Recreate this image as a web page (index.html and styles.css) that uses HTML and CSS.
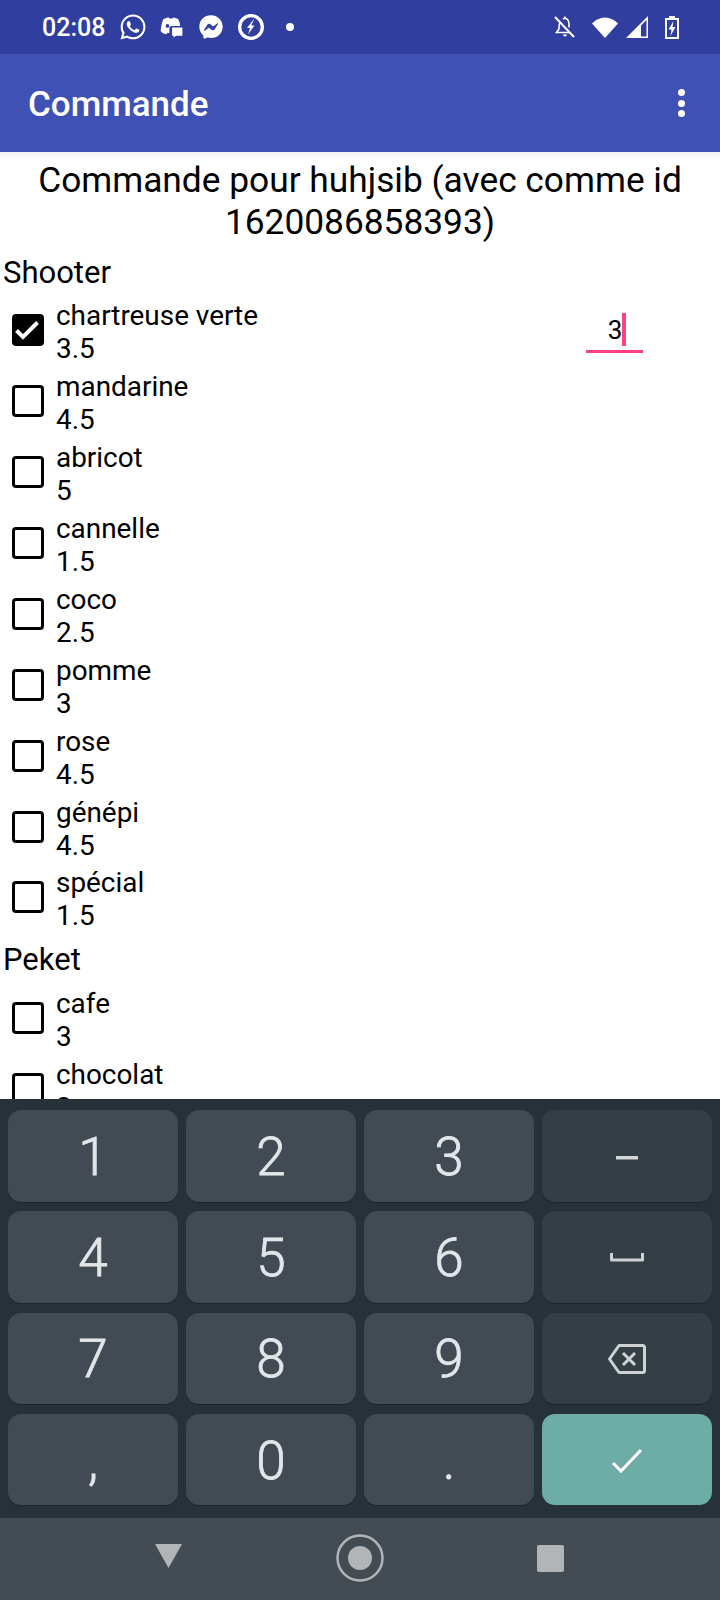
FILE: index.html
```html
<!DOCTYPE html>
<html lang="fr">
<head>
<meta charset="utf-8">
<title>Commande</title>
<link rel="stylesheet" href="styles.css">
</head>
<body>
<div class="phone">
  <header class="status">
    <span class="time">02:08</span>
    <svg class="si wa" viewBox="0 0 24 24"><path d="M12.04 2c-5.46 0-9.91 4.45-9.91 9.91 0 1.75.46 3.45 1.32 4.95L2.05 22l5.25-1.38c1.45.79 3.08 1.21 4.74 1.21 5.46 0 9.91-4.45 9.91-9.91 0-2.65-1.03-5.14-2.9-7.01A9.816 9.816 0 0 0 12.04 2m.01 1.67c2.2 0 4.26.86 5.82 2.42a8.225 8.225 0 0 1 2.41 5.83c0 4.54-3.7 8.23-8.24 8.23-1.48 0-2.93-.39-4.19-1.15l-.3-.17-3.12.82.83-3.04-.2-.32a8.188 8.188 0 0 1-1.26-4.38c.01-4.54 3.7-8.24 8.25-8.24M8.53 7.33c-.16 0-.43.06-.66.31-.22.25-.87.86-.87 2.07 0 1.22.89 2.39 1 2.56.14.17 1.76 2.67 4.25 3.73.59.27 1.05.42 1.41.53.59.19 1.13.16 1.56.1.48-.07 1.46-.6 1.67-1.18.21-.58.21-1.07.15-1.18-.07-.1-.23-.16-.48-.27-.25-.14-1.47-.74-1.69-.82-.23-.08-.37-.12-.56.12-.16.25-.64.81-.78.97-.15.17-.29.19-.53.07-.26-.13-1.06-.39-2-1.23-.74-.66-1.23-1.47-1.38-1.72-.12-.24-.01-.39.11-.5.11-.11.27-.29.37-.44.13-.14.17-.25.25-.41.08-.17.04-.31-.02-.43-.06-.11-.56-1.35-.77-1.84-.2-.48-.4-.42-.56-.43-.14 0-.3-.01-.47-.01z"/></svg>
    <svg class="si dc" viewBox="0 0 24 24"><path fill-rule="evenodd" d="M5.5 4.5C7.5 3.6 9.3 3.2 10 3.2l.5 1h3l.5-1c1.2.2 3 .8 4.500 1.500 1 1.700 1.800 4 2 6.300h-8c-1.100 0-2 .9-2 2V17.500c-.6 0-1.200-.1-1.800-.2l-.9 1.500c-2.300-.4-4.300-1.500-5.300-2.800 0-4 1.300-8.700 2.500-11.500zM8.700 9.200a1.700 1.800 0 1 0 0 3.600 1.700 1.800 0 1 0 0-3.600z"/><path d="M13 12.500h9.500v7.500H16.500L14.500 22v-2H13z"/></svg>
    <svg class="si ms" viewBox="0 0 24 24"><path fill-rule="evenodd" d="M12 2C6.400 2 2 6.100 2 11.700c0 2.900 1.200 5.500 3.100 7.200.2.100.3.400.3.600l.1 1.800c0 .6.600 1 1.200.7l2-.9c.2-.1.400-.1.600 0 .9.200 1.800.4 2.700.4 5.600 0 10-4.100 10-9.700S17.600 2 12 2zm6 7.500l-3 4.700c-.5.7-1.500.9-2.200.4l-2.300-1.800c-.2-.2-.5-.2-.7 0l-3.100 2.400c-.4.3-1-.2-.7-.6l3-4.700c.5-.7 1.500-.9 2.200-.4l2.300 1.800c.2.200.5.200.7 0l3.100-2.400c.4-.3 1 .2.700.6z"/></svg>
    <svg class="si bolt" viewBox="0 0 26 26"><path fill-rule="evenodd" d="M13 0a13 13 0 1 0 0 26 13 13 0 1 0 0-26zm0 3.300a9.700 9.700 0 1 1 0 19.400 9.700 9.700 0 1 1 0-19.400z"/><path d="M15.500 5.500l-6.500 8.500h3l-2 6.500 6.500-9h-3.300l2.800-6z"/></svg>
    <span class="sdot"></span>
    <span class="sspace"></span>
    <svg class="si bell" viewBox="0 0 22 24"><path d="M1 2l19 20" class="line"/><path d="M6 7.500C5 9 5 11 5 14l-2.500 3.500h13M9 4c1-.7 2-1 3-.5 2.500 1 3 3.500 3 6v3M11 1.500v2" class="line thin"/><path d="M9 19.500h4a2 2 0 0 1-4 0z"/></svg>
    <svg class="si wifi" viewBox="0 0 26 21"><path d="M13 21L0 6.500C3.500 3 8 .5 13 .5S22.500 3 26 6.500z"/></svg>
    <svg class="si sig" viewBox="0 0 22 22"><path fill-rule="evenodd" d="M22 0v22H0zM20.500 4L15 9.500V20.500h5.500z"/></svg>
    <svg class="si bat" viewBox="0 0 14 23"><path fill-rule="evenodd" d="M4 0h6v2h4v21H0V2h4zM2 4v17h10V4z"/><path d="M8.500 5L3.500 13.500h3L5.500 20l5-9H7.500z"/></svg>
  </header>

  <div class="toolbar">
    <h1 class="apptitle">Commande</h1>
    <div class="menu"><i></i><i></i><i></i></div>
  </div>

  <main class="content">
    <h2 class="heading">Commande pour huhjsib (avec comme id 1620086858393)</h2>
    <h3 class="section">Shooter</h3>
    <div class="row">
      <span class="box checked"><svg viewBox="0 0 32 32"><path d="M5.500 16.500l6.500 6.500L26.500 8.500" class="tick"/></svg></span>
      <div class="label"><div>chartreuse verte</div><div>3.5</div></div>
      <div class="qty"><span class="qty-text">3</span><span class="caret"></span></div>
    </div>
    <div class="row"><span class="box"></span><div class="label"><div>mandarine</div><div>4.5</div></div></div>
    <div class="row"><span class="box"></span><div class="label"><div>abricot</div><div>5</div></div></div>
    <div class="row"><span class="box"></span><div class="label"><div>cannelle</div><div>1.5</div></div></div>
    <div class="row"><span class="box"></span><div class="label"><div>coco</div><div>2.5</div></div></div>
    <div class="row"><span class="box"></span><div class="label"><div>pomme</div><div>3</div></div></div>
    <div class="row"><span class="box"></span><div class="label"><div>rose</div><div>4.5</div></div></div>
    <div class="row"><span class="box"></span><div class="label"><div>génépi</div><div>4.5</div></div></div>
    <div class="row"><span class="box"></span><div class="label"><div>spécial</div><div>1.5</div></div></div>
    <h3 class="section">Peket</h3>
    <div class="row"><span class="box"></span><div class="label"><div>cafe</div><div>3</div></div></div>
    <div class="row"><span class="box"></span><div class="label"><div>chocolat</div><div>3</div></div></div>
  </main>

  <section class="keyboard">
    <div class="key">1</div><div class="key">2</div><div class="key">3</div>
    <div class="key fn"><svg class="kicon minus" viewBox="0 0 22 10"><rect x="0" y="4" width="22" height="3.500"/></svg></div>
    <div class="key">4</div><div class="key">5</div><div class="key">6</div>
    <div class="key fn"><svg class="kicon space" viewBox="0 0 34 24"><path d="M1.500 7v7h31V7" class="kstroke"/></svg></div>
    <div class="key">7</div><div class="key">8</div><div class="key">9</div>
    <div class="key fn"><svg class="kicon wide" viewBox="0 0 38 30"><path d="M11 1.500h23.500a2 2 0 0 1 2 2v23a2 2 0 0 1-2 2H11L1.500 15zM15 9l12 12M27 9L15 21" class="kstroke"/></svg></div>
    <div class="key">,</div><div class="key">0</div><div class="key">.</div>
    <div class="key go"><svg class="kicon ok" viewBox="0 0 32 26"><path d="M2 15l8 8L30 2" class="okstroke"/></svg></div>
  </section>

  <nav class="navbar">
    <svg class="nav-back" viewBox="0 0 29 26"><path d="M1 1h27L14.500 25z"/></svg>
    <svg class="nav-home" viewBox="0 0 48 48"><circle cx="24" cy="24" r="22.500" class="ring"/><circle cx="24" cy="24" r="12"/></svg>
    <span class="nav-recent"></span>
  </nav>
</div>
</body>
</html>
```

FILE: styles.css
```css
* { box-sizing: border-box; }
html, body { margin: 0; padding: 0; }
body { width: 720px; height: 1600px; overflow: hidden; background: #fff; font-family: Roboto, "Liberation Sans", sans-serif; color: #000; }
.phone { width: 720px; height: 1600px; display: flex; flex-direction: column; overflow: hidden; }

.status { height: 54px; flex: none; background: #303f9f; color: #fff; display: flex; align-items: center; padding-left: 42px; }
.time { font-size: 25px; font-weight: 500; width: 79px; }
.si { fill: #fff; display: block; flex: none; }
.wa { width: 30px; height: 30px; margin-left: -3px; }
.dc { width: 26px; height: 26px; margin-left: 10px; }
.ms { width: 28px; height: 28px; margin-left: 13px; }
.bolt { width: 26px; height: 26px; margin-left: 13px; }
.sdot { width: 8px; height: 8px; border-radius: 50%; background: #fff; margin-left: 22px; }
.sspace { flex: 1; }
.bell { width: 22px; height: 24px; margin-right: 1px; }
.line { fill: none; stroke: #fff; stroke-width: 2; }
.thin { stroke-width: 1.600; }
.wifi { width: 26px; height: 21px; margin-left: 15px; }
.sig { width: 22px; height: 22px; margin-left: 8px; }
.bat { width: 14px; height: 23px; margin-left: 17px; margin-right: 41px; }

.toolbar { height: 98px; flex: none; background: #3f51b5; color: #fff; display: flex; align-items: center; justify-content: space-between; padding: 2px 35px 0 28px; position: relative; z-index: 1; }
.apptitle { margin: 0; font-size: 35px; font-weight: 500; }
.menu { display: flex; flex-direction: column; gap: 3.500px; margin-top: -2px; }
.menu i { display: block; width: 7px; height: 7px; border-radius: 50%; background: #fff; }

.content { flex: 1; min-height: 0; overflow: hidden; box-shadow: inset 0 8px 6px -6px rgba(0,0,0,.08); padding-top: 7px; }
.heading { margin: 0 0 3px; padding: 0 8px; font-size: 35.300px; font-weight: 400; line-height: 42px; text-align: center; }
.section { margin: 0; padding: 8px 3px 4.500px; font-size: 31px; font-weight: 400; line-height: 37px; }
.row { height: 70.875px; display: flex; align-items: center; padding-left: 12px; }
.box { width: 32px; height: 32px; border: 3.700px solid #000; border-radius: 4px; flex: none; margin-top: -1px; }
.box.checked { background: #000; position: relative; }
.box.checked svg { position: absolute; inset: -3.700px; width: 32px; height: 32px; }
.tick { fill: none; stroke: #fff; stroke-width: 4; }
.label { margin-left: 12px; padding-top: 3px; font-size: 27.900px; line-height: 33px; flex: 1; }
.qty { width: 57px; height: 44px; margin-right: 77px; border-bottom: 3px solid #ff4081; display: flex; justify-content: center; align-items: flex-end; font-size: 26px; line-height: 34px; padding-left: 5px; }
.caret { width: 4px; height: 33px; background: #ff4081; margin-bottom: 4px; }
.qty-text { margin-bottom: 3px; }

.keyboard { height: 419px; flex: none; background: #263238; display: grid; grid-template-columns: repeat(4, 170px); grid-auto-rows: 91.500px; column-gap: 8px; row-gap: 9.800px; padding: 11px 8px 0; }
.key { background: #424b53; border-radius: 13px; box-shadow: 0 1px 1px rgba(0,0,0,.25); color: #e3e6e8; font-size: 53px; font-weight: 300; -webkit-text-stroke: 0.8px #e3e6e8; padding-top: 2px; display: flex; align-items: center; justify-content: center; }
.key.fn { background: #333e45; }
.key.go { background: #6eada6; box-shadow: none; }
.kicon { fill: #d3d6d8; display: block; }
.kicon.minus { width: 22px; height: 10px; }
.kicon.space { width: 34px; height: 24px; }
.kicon.wide { width: 38px; height: 30px; }
.kicon.ok { width: 32px; height: 26px; }
.kstroke { fill: none; stroke: #cfd2d4; stroke-width: 3; stroke-linejoin: round; }
.okstroke { fill: none; stroke: #fff; stroke-width: 3; }

.navbar { height: 82px; flex: none; background: #444c53; display: flex; align-items: center; padding-bottom: 3px; }
.nav-back { width: 29px; height: 26px; fill: #b1b5b7; margin-left: 154px; margin-top: -3px; }
.nav-home { width: 48px; height: 48px; fill: #b1b5b7; margin-left: 153px; }
.ring { fill: none; stroke: #b1b5b7; stroke-width: 2.500; }
.nav-recent { width: 27px; height: 27px; background: #b1b5b7; border-radius: 2px; margin-left: 153px; margin-top: 2px; }
```
